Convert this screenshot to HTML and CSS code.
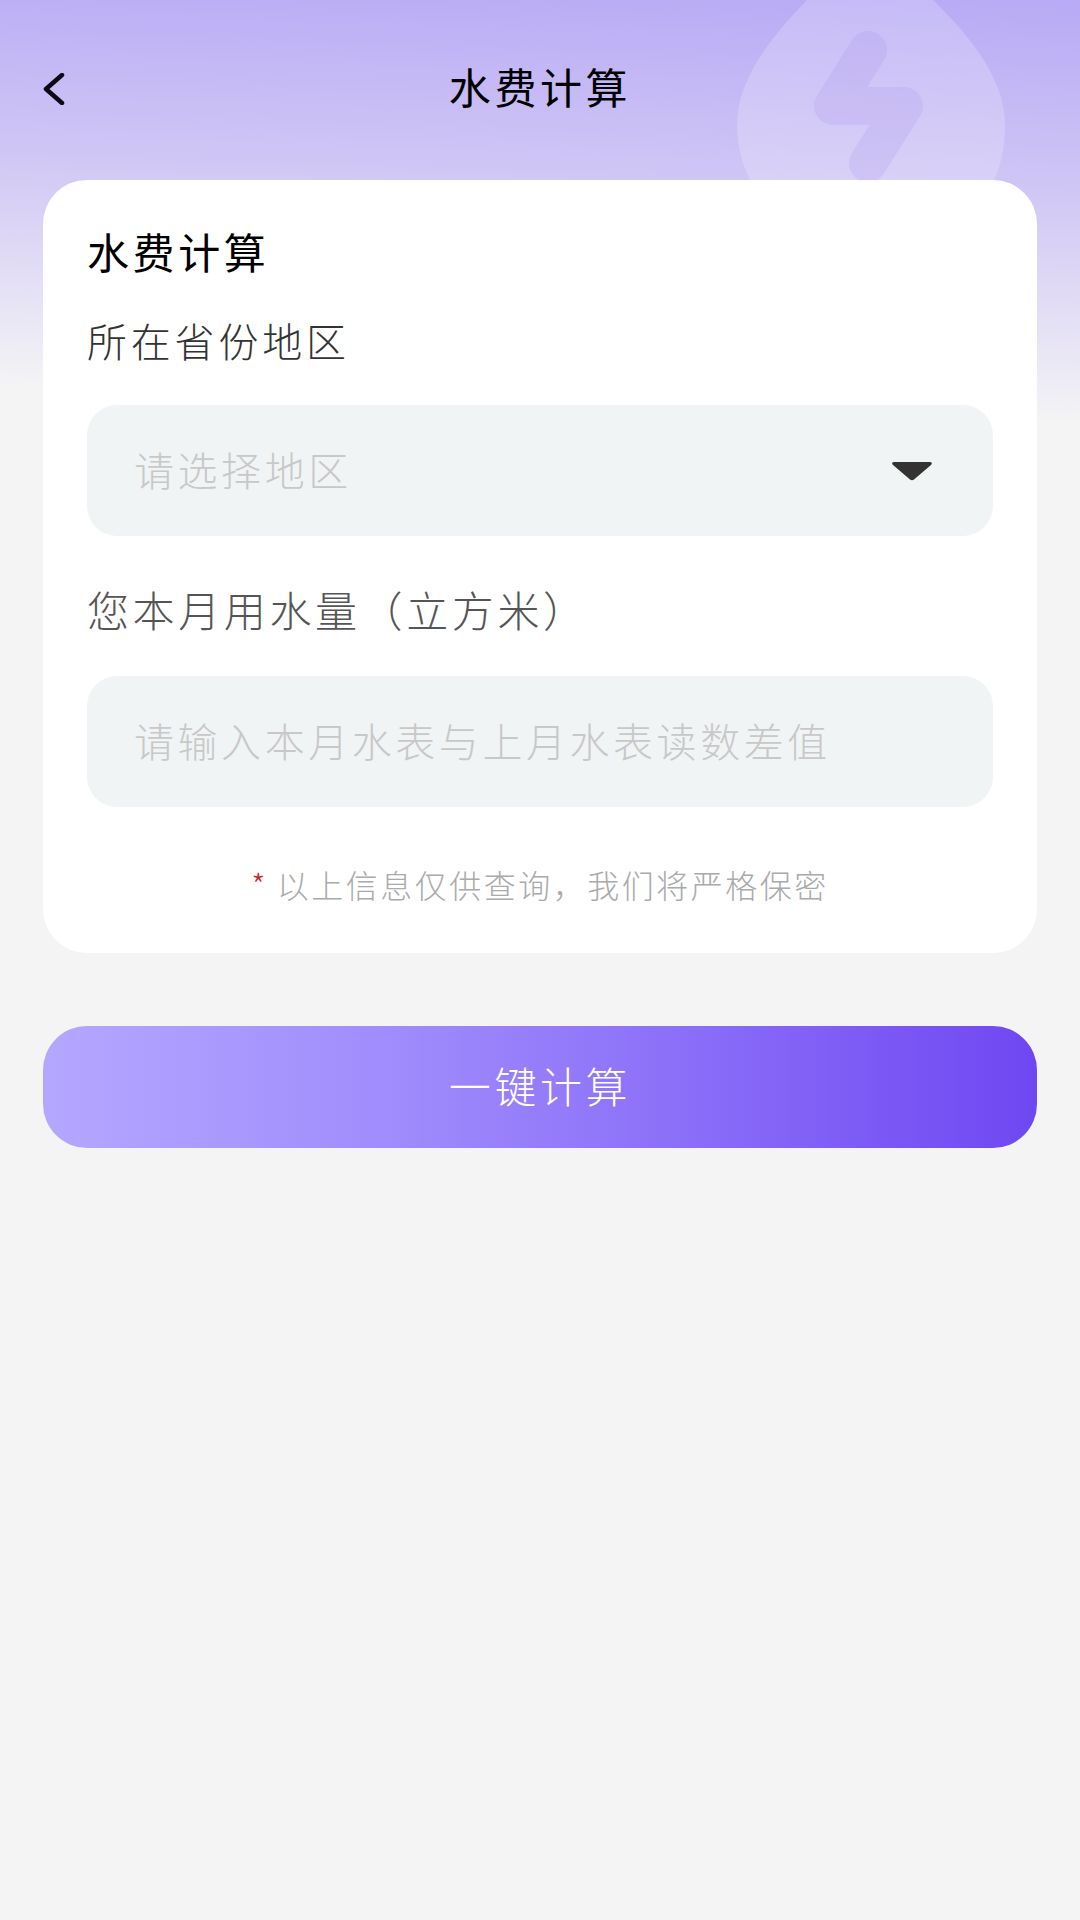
FILE: index.html
```html
<!DOCTYPE html>
<html lang="zh-CN">

<head>
    <meta charset="UTF-8">
    <link rel="stylesheet" href="styles.css">
    <meta name="viewport" content="width=device-width, initial-scale=1.0">
    <title>水费计算</title>
</head>

<body>
    <div class="page">
        <!-- water drop with a bolt, sits behind the card -->
        <svg class="drop" width="280" height="180" viewBox="730 0 280 180">
            <path class="drop-body" d="M807 0C770 38 737 80 737 125C737 150 744 168 752 185L992 185C1000 168 1005 150 1005 125C1005 80 972 38 933 0Z" />
            <polyline class="drop-bolt" points="868,50 833,106 904,106 868,163" />
        </svg>

        <div class="header">
            <a class="back" href="#">
                <svg width="24" height="32" viewBox="0 0 24 32">
                    <polyline class="back-line" points="19,2 3,16 19,30" />
                </svg>
            </a>
            <h1 class="title">水费计算</h1>
        </div>

        <form class="card" role="form">
            <h2 class="card-title">水费计算</h2>
            <div class="label label-area">所在省份地区</div>
            <div class="field field-select">
                <span class="hint">请选择地区</span>
                <svg class="arrow" width="42" height="22" viewBox="0 0 42 22">
                    <path d="M3 2L39 2C41 2 41.500 4 40 5L23 19.500C21.800 20.500 20.200 20.500 19 19.500L2 5C0.500 4 1 2 3 2Z" />
                </svg>
            </div>
            <div class="label label-usage">您本月用水量（立方米）</div>
            <div class="field">
                <input class="in" type="text" name="usage" placeholder="请输入本月水表与上月水表读数差值">
            </div>
            <p class="note"><span class="star">*</span>以上信息仅供查询，我们将严格保密</p>
        </form>

        <button class="btn" type="submit"><span class="btn-text">一键计算</span></button>
    </div>
</body>

</html>
```

FILE: styles.css
```css
* {
    box-sizing: border-box;
}

body {
    margin: 0;
    background: #f4f4f5;
    font-family: "Noto Sans CJK SC", "Noto Sans", sans-serif;
}

.page {
    position: relative;
    min-height: 1920px;
    padding-bottom: 40px;
    background: linear-gradient(182deg, #b8aaf5 0, #d0c6f5 190px, #f4f4f5 425px) no-repeat;
    background-size: 100% 440px;
}

.drop {
    position: absolute;
    top: 0;
    left: 730px;
}

.drop-body {
    fill: #fff;
    opacity: 0.2;
}

.drop-bolt {
    fill: none;
    stroke: #a08ae8;
    stroke-width: 38;
    stroke-linecap: round;
    stroke-linejoin: round;
    opacity: 0.18;
}

.header {
    position: relative;
    display: flex;
    align-items: center;
    justify-content: center;
    height: 180px;
    padding-bottom: 8px;
}

.back {
    position: absolute;
    left: 43px;
    top: 73px;
    display: block;
    height: 32px;
}

.back-line {
    fill: none;
    stroke: #0c0a14;
    stroke-width: 4.500;
    stroke-linecap: round;
    stroke-linejoin: round;
}

.title {
    margin: 0;
    font-size: 42px;
    font-weight: 400;
    line-height: 56px;
    letter-spacing: 3.600px;
    color: #000;
}

.card {
    position: relative;
    display: block;
    margin: 0 43px;
    padding: 43px 44px 44px;
    background: #fff;
    border-radius: 44px;
}

.card-title {
    margin: 0;
    font-size: 42px;
    font-weight: 400;
    line-height: 56px;
    letter-spacing: 3.600px;
    color: #000;
}

.label {
    font-weight: 300;
    line-height: 56px;
}

.label-area {
    margin: 33px 0 37px;
    font-size: 40px;
    letter-spacing: 3.800px;
    color: #333;
}

.label-usage {
    margin: 45px 0 39px;
    font-size: 42px;
    letter-spacing: 3.600px;
    color: #555;
}

.field {
    display: flex;
    align-items: center;
    height: 131px;
    padding: 0 47px;
    background: #f1f4f5;
    border-radius: 30px;
}

.field-select {
    justify-content: space-between;
    padding-right: 60px;
}

.hint,
.in::placeholder {
    color: #c8c8c8;
}

.hint,
.in {
    font-family: inherit;
    font-size: 40px;
    font-weight: 300;
    letter-spacing: 3.550px;
    transform: translateY(-2px);
}

.in {
    width: 100%;
    padding: 0;
    border: 0;
    outline: 0;
    background: none;
}

.arrow {
    display: block;
    fill: #333;
}

.note {
    margin: 52px 0 0;
    font-size: 32px;
    font-weight: 300;
    line-height: 50px;
    letter-spacing: 2.500px;
    text-align: center;
    color: #aaa;
}

.star {
    margin-right: 9px;
    color: #c8272c;
}

.btn {
    display: block;
    width: 994px;
    height: 122px;
    margin: 73px 43px 0;
    padding: 0;
    border: 0;
    border-radius: 44px;
    background: linear-gradient(90deg, #b4a7ff 0%, #a08cfc 35%, #8a6ef8 65%, #6f47f2 100%);
    font-family: inherit;
    font-size: 42px;
    font-weight: 300;
    letter-spacing: 3.600px;
    color: #fff;
    cursor: pointer;
}

.btn-text {
    position: relative;
    top: -3px;
}
```
